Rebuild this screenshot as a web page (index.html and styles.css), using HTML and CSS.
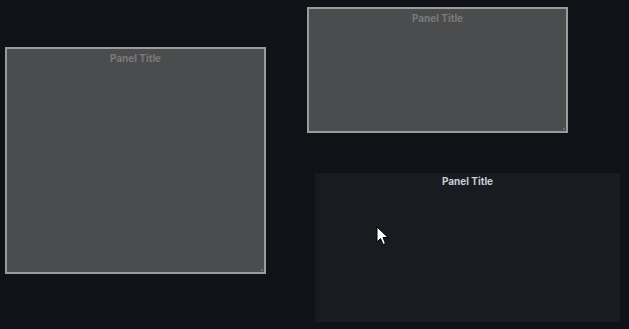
FILE: index.html
```html
<!DOCTYPE html>
<html lang="en">
<head>
  <meta charset="UTF-8" />
  <title>Dashboard</title>
  <link rel="stylesheet" href="styles.css">
</head>
<body>

<div class="dashboard">

  <!-- placeholder while dragging -->
  <div class="panel placeholder" style="left:5px; top:47px; width:261px; height:227px;">
    <div class="panel-title">Panel Title</div>
    <span class="resize-handle"></span>
  </div>

  <div class="panel placeholder" style="left:307px; top:7px; width:261px; height:126px;">
    <div class="panel-title">Panel Title</div>
    <span class="resize-handle"></span>
  </div>

  <!-- the real panel -->
  <div class="panel" style="left:315px; top:173px; width:305px; height:149px;">
    <div class="panel-title">Panel Title</div>
  </div>

  <svg class="cursor" width="14" height="22" viewBox="0 0 14 22">
    <path d="M1 1 L1 16 L4.5 12.5 L7 18.5 L9.5 17.5 L7 11.5 L12 11.5 Z" fill="#fff" stroke="#000" stroke-width="1" stroke-linejoin="round"/>
  </svg>

</div>

</body>
</html>
```

FILE: styles.css
```css
body {
  margin: 0;
  background: #111217;
  font-family: Inter, 'Open Sans', sans-serif;
  overflow: hidden;
}
.dashboard {
  position: relative;
  width: 629px;
  height: 329px;
}
.panel {
  position: absolute;
  box-sizing: border-box;
  background: #181b1f;
  display: flex;
  flex-direction: column;
}
.panel-title {
  text-align: center;
  font-size: 10px;
  font-weight: 700;
  color: #ccccdc;
  padding-top: 2px;
  line-height: 13px;
}
.placeholder {
  background: #4b4c4d;
  border: 2px solid #9b9b9b;
}
.placeholder .panel-title {
  color: #7a7a7b;
  padding-top: 3px;
}
.resize-handle {
  position: absolute;
  right: 1px;
  bottom: 1px;
  width: 2px;
  height: 2px;
  background: #6e6e6e;
}
.cursor {
  position: absolute;
  left: 376px;
  top: 226px;
}
```
